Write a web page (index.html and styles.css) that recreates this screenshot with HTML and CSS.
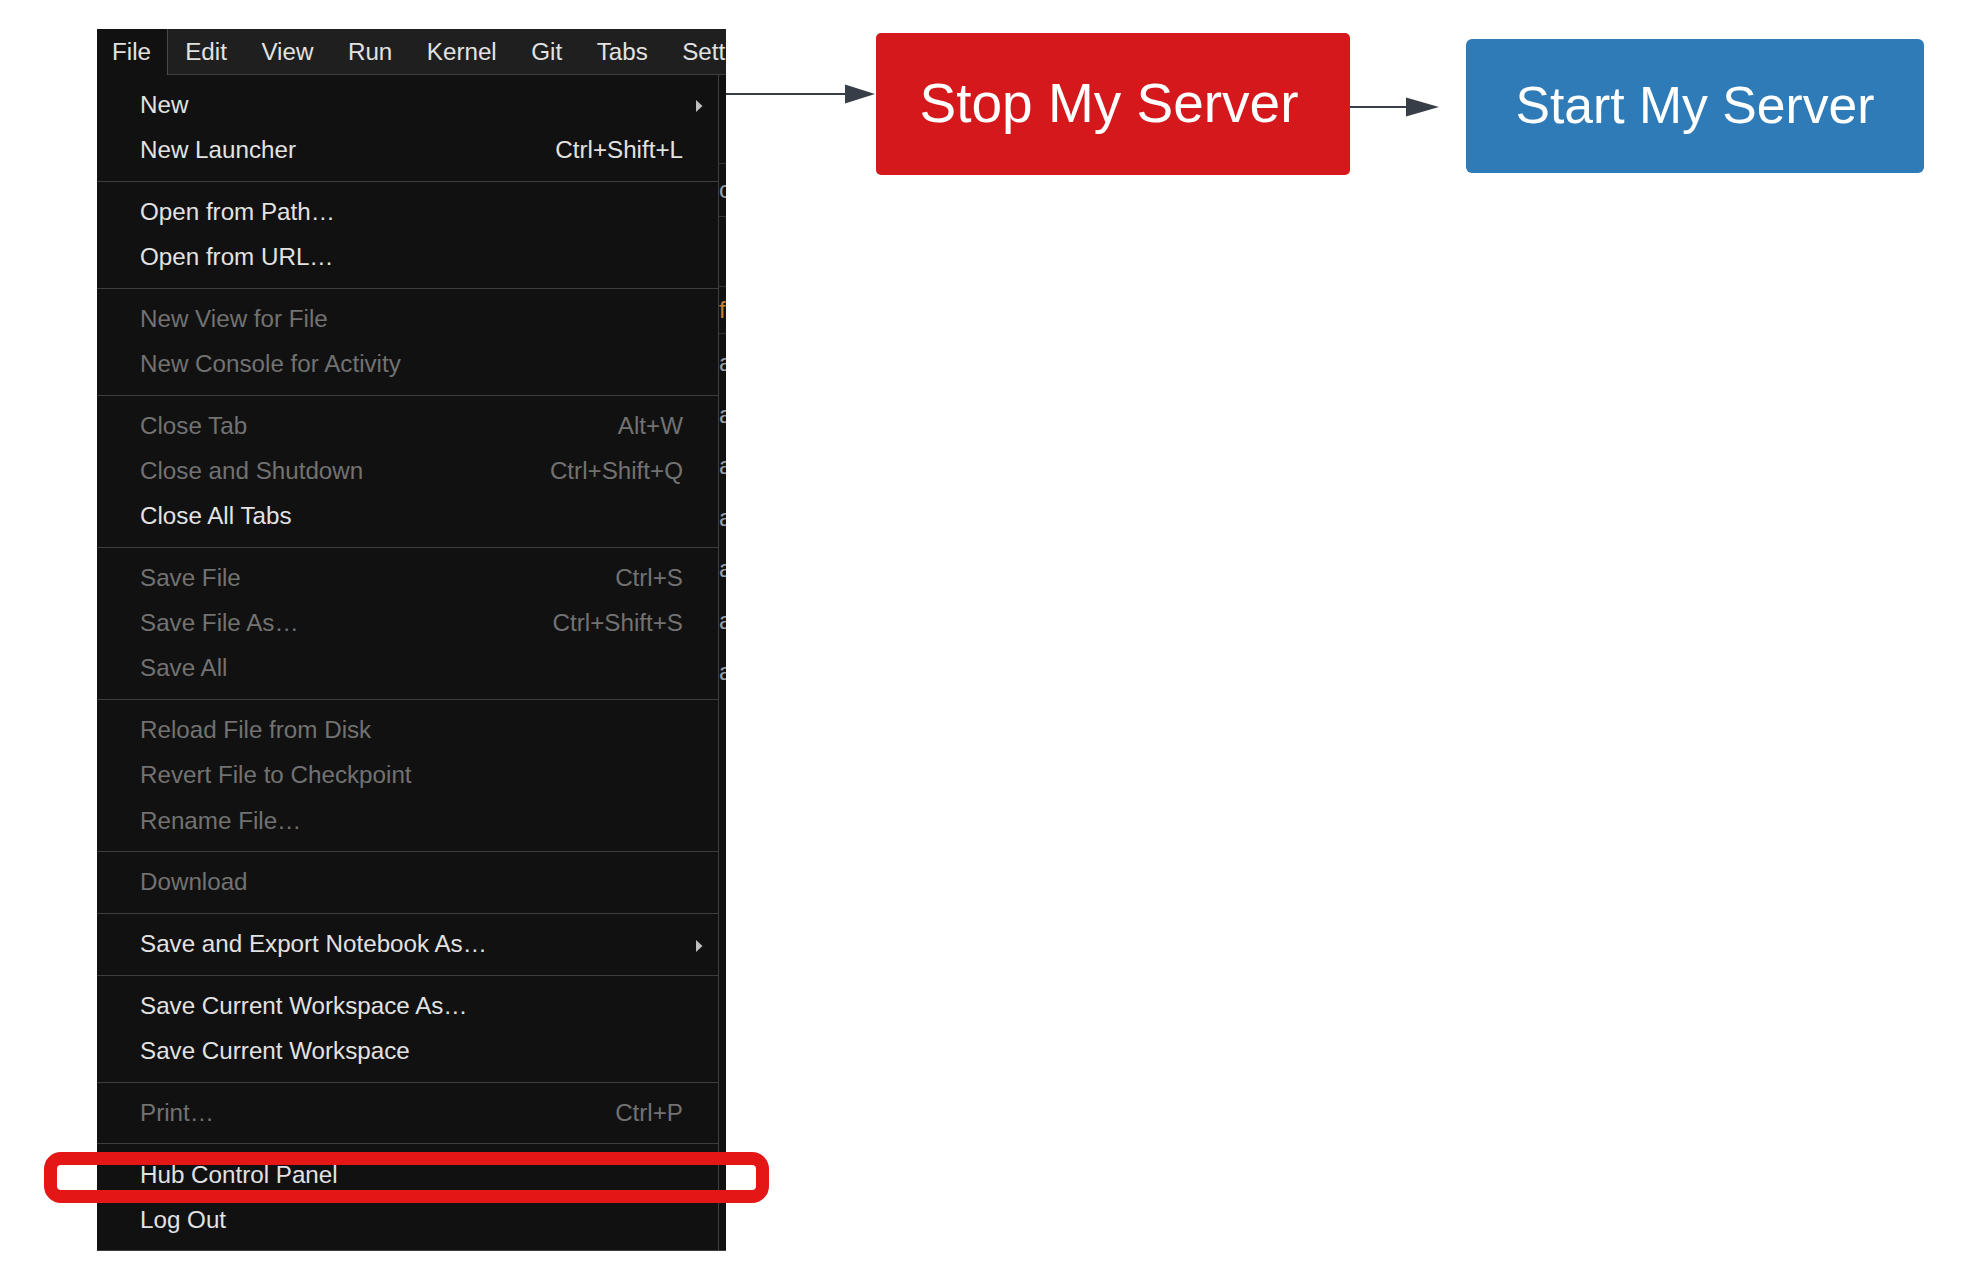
FILE: index.html
```html
<!DOCTYPE html>
<html>
<head>
<meta charset="utf-8">
<title>JupyterHub server flow</title>
<link rel="stylesheet" href="styles.css">
</head>
<body>
<div class="page">
  <div class="jlab">
    <div class="menubar">
      <div class="mb-item active">File</div>
      <div class="mb-item">Edit</div>
      <div class="mb-item">View</div>
      <div class="mb-item">Run</div>
      <div class="mb-item">Kernel</div>
      <div class="mb-item">Git</div>
      <div class="mb-item">Tabs</div>
      <div class="mb-item">Settings</div>
    </div>
    <div class="menu-body">
      <div class="panel">
        <div class="mi"><span class="label">New</span><span class="sub"><svg width="7" height="12" viewBox="0 0 7 12"><polygon points="0,0 6.5,6 0,12" fill="#bdbdbd"/></svg></span></div>
        <div class="mi"><span class="label">New Launcher</span><span class="key">Ctrl+Shift+L</span><span class="sub"></span></div>
        <div class="sep"></div>
        <div class="mi"><span class="label">Open from Path…</span><span class="sub"></span></div>
        <div class="mi"><span class="label">Open from URL…</span><span class="sub"></span></div>
        <div class="sep"></div>
        <div class="mi dis"><span class="label">New View for File</span><span class="sub"></span></div>
        <div class="mi dis"><span class="label">New Console for Activity</span><span class="sub"></span></div>
        <div class="sep"></div>
        <div class="mi dis"><span class="label">Close Tab</span><span class="key">Alt+W</span><span class="sub"></span></div>
        <div class="mi dis"><span class="label">Close and Shutdown</span><span class="key">Ctrl+Shift+Q</span><span class="sub"></span></div>
        <div class="mi"><span class="label">Close All Tabs</span><span class="sub"></span></div>
        <div class="sep"></div>
        <div class="mi dis"><span class="label">Save File</span><span class="key">Ctrl+S</span><span class="sub"></span></div>
        <div class="mi dis"><span class="label">Save File As…</span><span class="key">Ctrl+Shift+S</span><span class="sub"></span></div>
        <div class="mi dis"><span class="label">Save All</span><span class="sub"></span></div>
        <div class="sep"></div>
        <div class="mi dis"><span class="label">Reload File from Disk</span><span class="sub"></span></div>
        <div class="mi dis"><span class="label">Revert File to Checkpoint</span><span class="sub"></span></div>
        <div class="mi dis"><span class="label">Rename File…</span><span class="sub"></span></div>
        <div class="sep"></div>
        <div class="mi dis"><span class="label">Download</span><span class="sub"></span></div>
        <div class="sep"></div>
        <div class="mi"><span class="label">Save and Export Notebook As…</span><span class="sub"><svg width="7" height="12" viewBox="0 0 7 12"><polygon points="0,0 6.5,6 0,12" fill="#bdbdbd"/></svg></span></div>
        <div class="sep"></div>
        <div class="mi"><span class="label">Save Current Workspace As…</span><span class="sub"></span></div>
        <div class="mi"><span class="label">Save Current Workspace</span><span class="sub"></span></div>
        <div class="sep"></div>
        <div class="mi dis"><span class="label">Print…</span><span class="key">Ctrl+P</span><span class="sub"></span></div>
        <div class="sep"></div>
        <div class="mi"><span class="label">Hub Control Panel</span><span class="sub"></span></div>
        <div class="mi"><span class="label">Log Out</span><span class="sub"></span></div>
      </div>
      <div class="strip">
        <div class="seg s1"></div>
        <div class="seg s2">c</div>
        <div class="seg s3"></div>
        <div class="seg s4 orange">f</div>
        <div class="rows">
          <div class="row">a</div>
          <div class="row">a</div>
          <div class="row">a</div>
          <div class="row">a</div>
          <div class="row">a</div>
          <div class="row">a</div>
          <div class="row">a</div>
        </div>
      </div>
    </div>
  </div>

  <svg class="arrow arrow1" width="149" height="20" viewBox="0 0 149 20">
    <line x1="0" y1="10" x2="121" y2="10" stroke="#373e48" stroke-width="2"/>
    <polygon points="119,0.5 149,10 119,19.5" fill="#373e48"/>
  </svg>

  <div class="btn btn-stop">Stop My Server</div>

  <svg class="arrow arrow2" width="89" height="20" viewBox="0 0 89 20">
    <line x1="0" y1="10" x2="58" y2="10" stroke="#373e48" stroke-width="2"/>
    <polygon points="56,0.5 89,10 56,19.5" fill="#373e48"/>
  </svg>

  <div class="btn btn-start">Start My Server</div>

  <div class="ring"></div>
</div>
</body>
</html>
```

FILE: styles.css
```css
* { box-sizing: border-box; }

html, body {
  margin: 0;
  padding: 0;
  background: #ffffff;
}

body {
  font-family: "Liberation Sans", Arial, sans-serif;
}

.page {
  position: relative;
  width: 1973px;
  height: 1288px;
  display: flex;
  align-items: flex-start;
  padding: 29px 0 0 97px;
  overflow: hidden;
}

/* ---------- JupyterLab menu ---------- */
.jlab {
  width: 629px;
  flex: none;
}

.menubar {
  display: flex;
  height: 46px;
  background: #1f1f1f;
  overflow: hidden;
  white-space: nowrap;
}

.mb-item {
  flex: none;
  height: 46px;
  line-height: 45px;
  padding: 0 17.25px;
  font-size: 24.2px;
  color: #e2e2e2;
  border-bottom: 1px solid #3e3e3e;
}

.mb-item.active {
  background: #111111;
  padding: 0 16px 0 15px;
  border-right: 1px solid #4a4a4a;
  border-bottom: none;
}

.menu-body {
  display: flex;
  align-items: stretch;
}

.panel {
  width: 622px;
  background: #111111;
  border-right: 1px solid #3e3e3e;
  border-bottom: 1px solid #3e3e3e;
  padding: 7.4px 0 7.4px;
}

.mi {
  display: flex;
  align-items: center;
  height: 45.2px;
  padding-left: 43px;
  font-size: 24.2px;
  color: #e2e2e2;
  white-space: nowrap;
}

.mi.dis {
  color: #727272;
}

.mi .label {
  flex: 1;
}

.mi .sub {
  width: 35px;
  flex: none;
  display: flex;
  align-items: center;
  padding-left: 13px;
  padding-top: 3px;
}

.sep {
  height: 1px;
  margin: 7.8px 0;
  background: #3e3e3e;
}

/* strip of underlying content visible to the right of the menu */
.strip {
  width: 7px;
  flex: none;
  background: #111111;
  border-bottom: 1px solid #3e3e3e;
  overflow: hidden;
  font-size: 24px;
  color: #9aa0a6;
  white-space: nowrap;
}

.seg {
  border-bottom: 1px solid #333333;
  line-height: 1;
  display: flex;
  align-items: center;
}

.s1 { height: 89px; }
.s2 { height: 53px; }
.s3 { height: 70px; }
.s4 { height: 47px; }

.orange { color: #c77d35; }

.rows {
  padding-top: 3px;
}

.row {
  height: 51.5px;
  line-height: 51.5px;
}

/* ---------- arrows & buttons ---------- */
.arrow {
  flex: none;
  display: block;
}

.arrow1 { margin-top: 55px; }

.arrow2 { margin-top: 68px; }

.btn {
  flex: none;
  display: flex;
  align-items: center;
  justify-content: center;
  color: #ffffff;
  white-space: nowrap;
  border-radius: 5px;
}

.btn-stop {
  margin-left: 1px;
  margin-top: 4px;
  width: 474px;
  height: 142px;
  background: #d5181c;
  font-size: 55px;
  padding: 0 8px 3px 0;
}

.btn-start {
  margin-left: 27px;
  margin-top: 10px;
  width: 458px;
  height: 134px;
  background: #2e7bb7;
  border-radius: 6px;
  font-size: 51.7px;
  padding-bottom: 2px;
}

/* red highlight around "Hub Control Panel" */
.ring {
  position: absolute;
  left: 44px;
  top: 1152px;
  width: 725px;
  height: 51px;
  border: 13px solid #e41616;
  border-radius: 17px;
}
```
